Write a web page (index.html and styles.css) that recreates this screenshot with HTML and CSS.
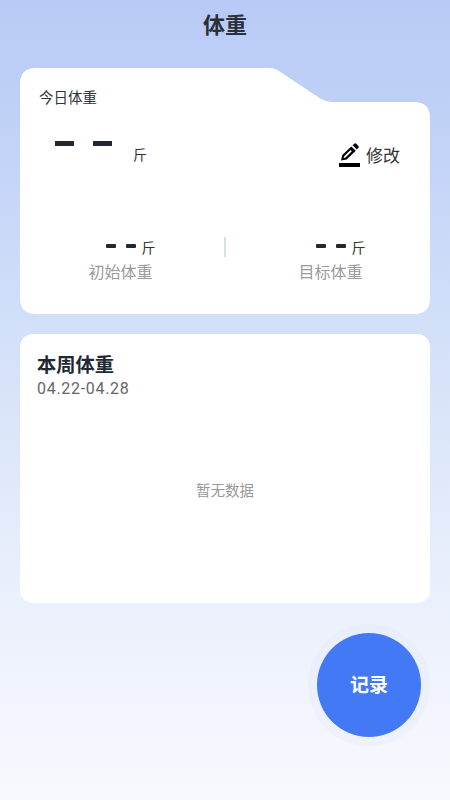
FILE: index.html
```html
<!DOCTYPE html>
<html>

<head>
    <title>体重</title>
    <meta charset="utf-8">
    <meta name="viewport" content="width=device-width, initial-scale=1.0">
    <link rel="stylesheet" href="styles.css">
</head>

<body>
    <h1 class="title">体重</h1>

    <section class="today">
        <p class="today_label">今日体重</p>

        <div class="today_row">
            <div class="today_value">
                <span class="dash big"></span>
                <span class="dash big"></span>
                <span class="unit">斤</span>
            </div>
            <div class="edit">
                <svg class="edit_icon" viewBox="0 0 22 24" width="22" height="24">
                    <path d="M0 20 H21 V24 H0 Z" fill="#000" />
                    <path d="M2 17.5 L3.3 12 L12.3 3.4 L16.8 7.8 L7.6 16.4 Z M5.2 13.2 L4.7 15 L6.5 14.5 L12.8 8.2 L11.6 7 Z" fill="#000" fill-rule="evenodd" />
                    <path d="M13.6 2.3 L15.6 0.5 Q16.3 0 17 0.6 L19.6 3.2 Q20.2 3.9 19.6 4.6 L17.9 6.6 Z" fill="#000" />
                </svg>
                <span>修改</span>
            </div>
        </div>

        <div class="goals">
            <div class="goal">
                <div class="goal_value">
                    <span class="dash small"></span>
                    <span class="dash small"></span>
                    <span class="unit">斤</span>
                </div>
                <p class="goal_label">初始体重</p>
            </div>
            <div class="divider"></div>
            <div class="goal">
                <div class="goal_value">
                    <span class="dash small"></span>
                    <span class="dash small"></span>
                    <span class="unit">斤</span>
                </div>
                <p class="goal_label">目标体重</p>
            </div>
        </div>
    </section>

    <section class="week">
        <h2>本周体重</h2>
        <p class="week_date">04.22-04.28</p>
        <p class="empty">暂无数据</p>
    </section>

    <button class="record">记录</button>
</body>

</html>
```

FILE: styles.css
```css
html,
body {
    height: 100%;
}

body {
    margin: 0;
    height: 800px;
    overflow: hidden;
    position: relative;
    background: linear-gradient(180deg, #b8cbf6 0%, #c0d1f6 15%, #d3e0f9 42%, #e6edfb 68%, #f8f9fe 100%);
    color: #222831;
    font-family: "Noto Sans CJK SC", "Noto Sans", sans-serif;
}

p,
h1,
h2 {
    margin: 0;
}

.title {
    font-size: 22px;
    line-height: 30px;
    font-weight: 700;
    text-align: center;
    padding-top: 8px;
    color: #2a3038;
}

.today {
    margin: 30px 20px 0;
    height: 246px;
    box-sizing: border-box;
    padding: 19px 19px 0;
    background: #fff;
    clip-path: path("M0 16 Q0 0 16 0 H249 Q255 0 259 3 L301 31 Q306 34 312 34 H394 Q410 34 410 50 V230 Q410 246 394 246 H16 Q0 246 0 230 Z");
}

.today_label {
    font-size: 14.5px;
    line-height: 20px;
    color: #2c3540;
}

.today_row {
    display: flex;
    justify-content: space-between;
    margin-top: 24px;
    padding-right: 11px;
    height: 38px;
}

.today_value {
    display: flex;
    padding-left: 16px;
}

.dash {
    display: block;
    background: #222831;
}

.dash.big {
    width: 19px;
    height: 5px;
    margin-right: 19px;
    margin-top: 10px;
}

.today_value .unit {
    margin: 13px 0 0 2px;
    font-size: 14px;
    line-height: 20px;
}

.unit {
    color: #333;
}

.edit {
    display: flex;
    align-items: flex-start;
    gap: 5px;
    margin-top: 12px;
    font-size: 17px;
    line-height: 24px;
    color: #333;
}

.edit_icon {
    display: block;
}

.goals {
    display: grid;
    grid-template-columns: 1fr 2px 1fr;
    margin: 68px -19px 0;
}

.goal {
    display: flex;
    flex-direction: column;
    align-items: center;
}

.goal:first-child {
    padding-right: 3px;
}

.goal:last-child {
    padding-left: 5px;
}

.goal_value {
    display: flex;
    align-items: flex-start;
    height: 20px;
    margin-left: 20px;
}

.dash.small {
    width: 10px;
    height: 3.5px;
    margin-right: 10px;
    margin-top: 7px;
    border-radius: 1px;
}

.goal_value .unit {
    margin-left: -4px;
    font-size: 14px;
    line-height: 20px;
}

.goal_label {
    font-size: 16px;
    line-height: 24px;
    color: #9a9a9a;
    margin-top: 2px;
}

.divider {
    width: 2px;
    height: 20px;
    background: #cfe6e6;
}

.week {
    margin: 20px 20px 0;
    height: 269px;
    box-sizing: border-box;
    padding: 16px 17px 0;
    background: #fff;
    border-radius: 13px;
}

.week h2 {
    font-size: 19.25px;
    line-height: 28px;
    font-weight: 700;
}

.week_date {
    font-size: 16px;
    line-height: 22px;
    letter-spacing: 0.7px;
    color: #666;
    font-family: Roboto, "Noto Sans CJK SC", sans-serif;
}

.empty {
    margin-top: 79px;
    font-size: 14.5px;
    line-height: 22px;
    color: #999;
    text-align: center;
}

.record {
    position: absolute;
    left: 317px;
    top: 633px;
    width: 104px;
    height: 104px;
    padding: 0 0 3px;
    border: none;
    border-radius: 50%;
    background: #4479f5;
    color: #fff;
    font-family: inherit;
    font-size: 19px;
    font-weight: 700;
    box-shadow: 0 0 0 9px rgba(225, 232, 250, 0.3);
}
```
